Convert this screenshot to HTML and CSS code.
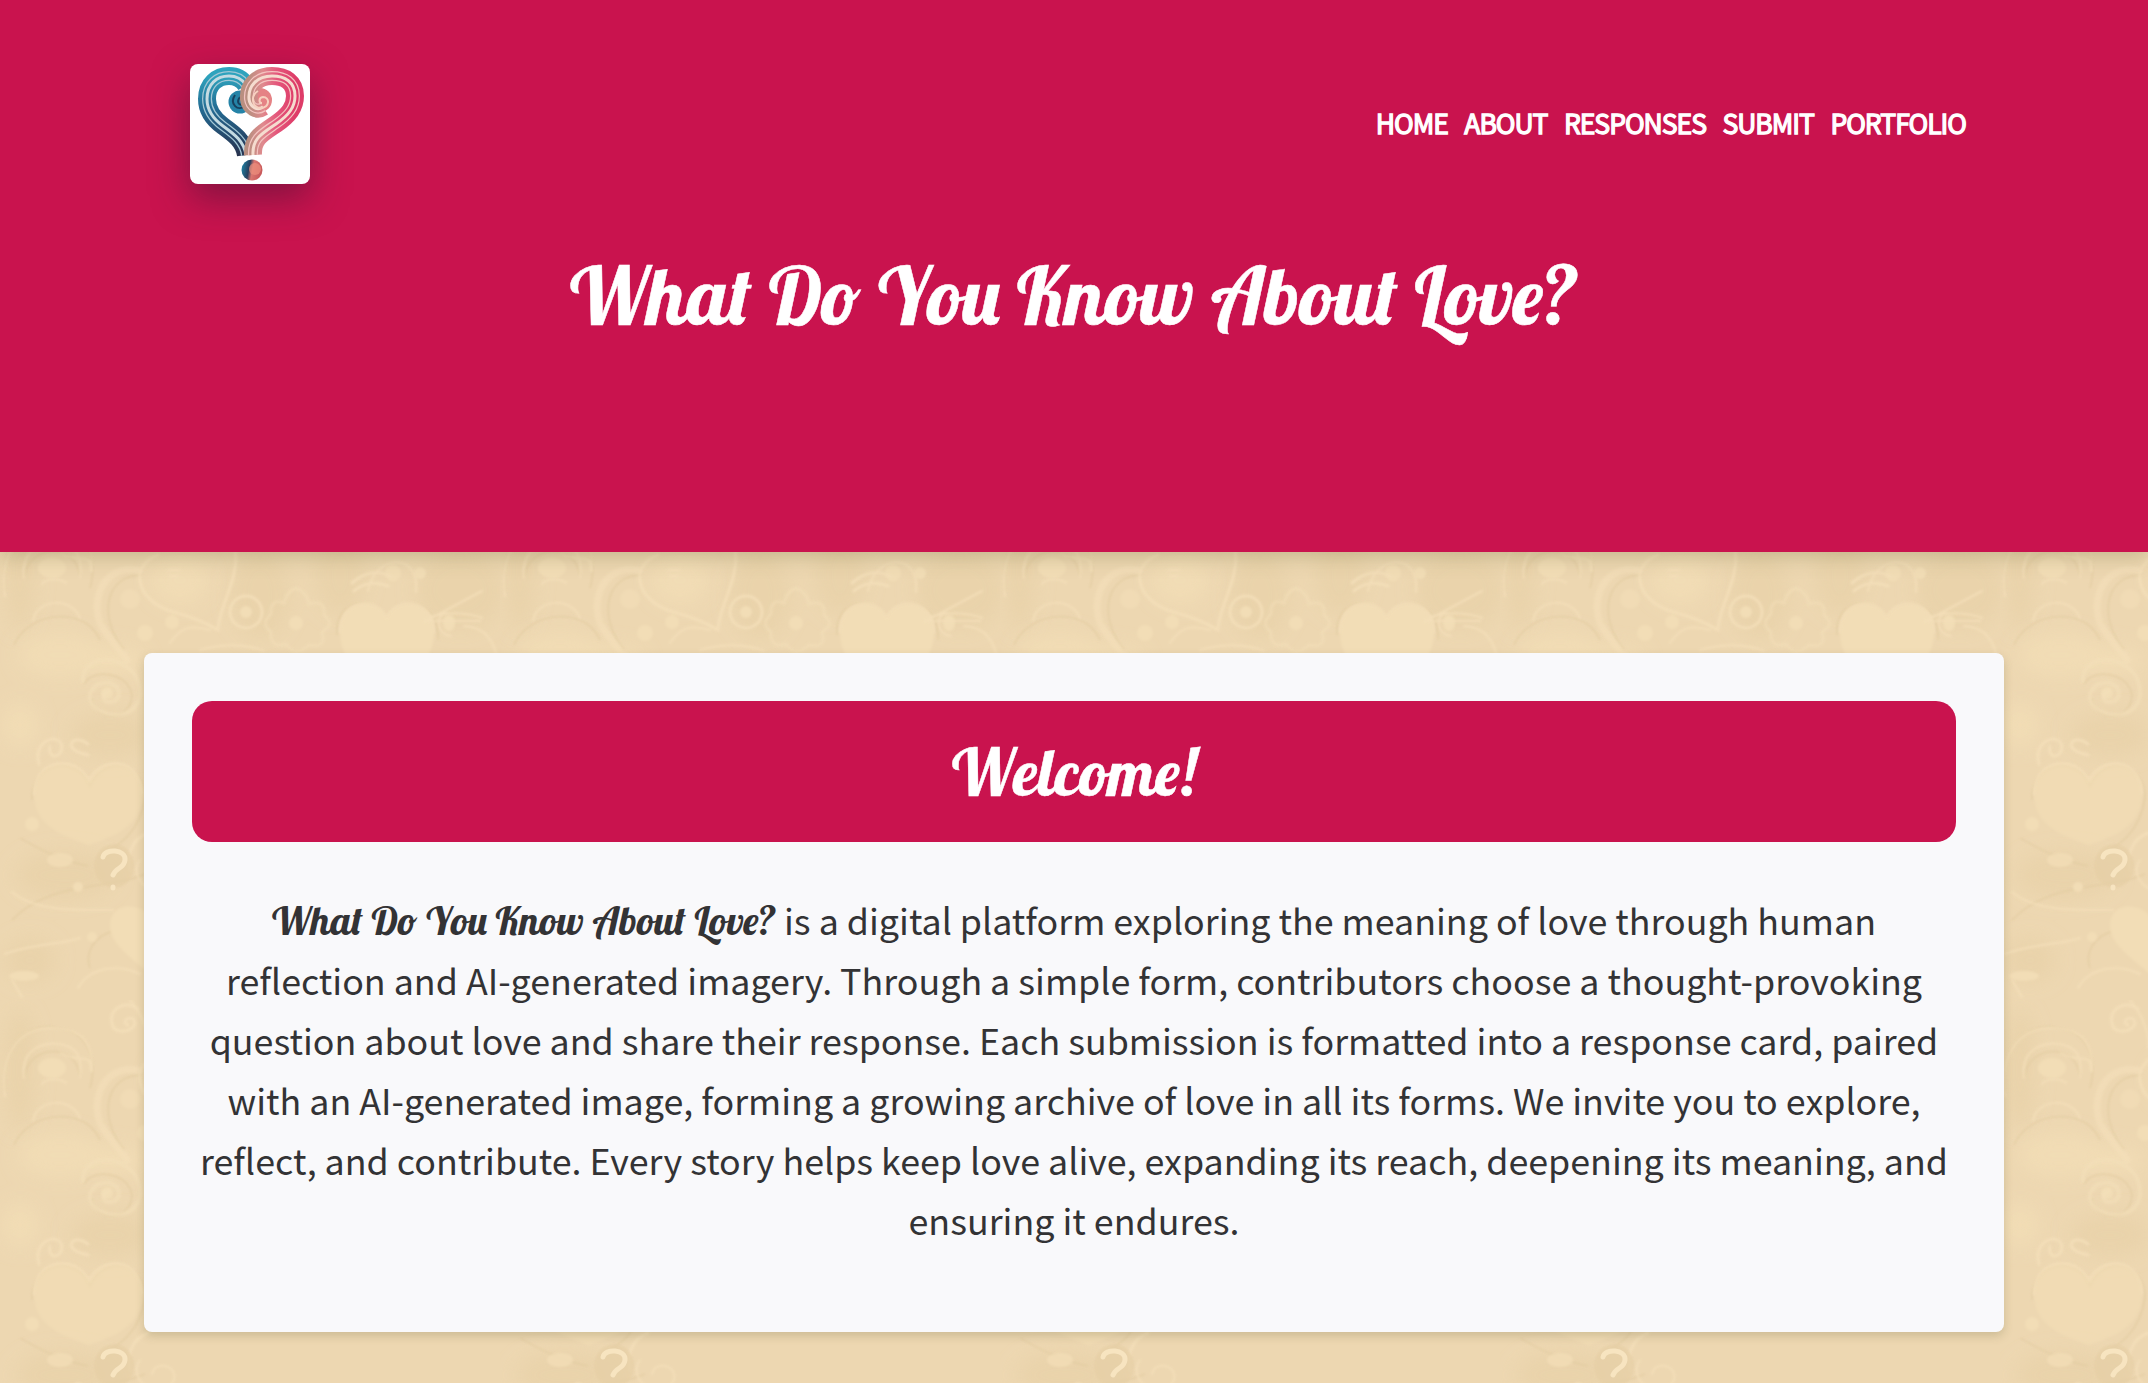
FILE: index.html
```html
<!DOCTYPE html>
<html lang="en">
<head>
<meta charset="utf-8">
<title>What Do You Know About Love?</title>
<link rel="stylesheet" href="styles.css">
</head>
<body>
<svg class="backdrop" aria-hidden="true">
  <defs>
    <filter id="soft" x="-5%" y="-5%" width="110%" height="110%"><feGaussianBlur stdDeviation="1"/></filter>
    <filter id="haze" x="-20%" y="-20%" width="140%" height="140%"><feGaussianBlur stdDeviation="9"/></filter>
    <pattern id="ornament" width="500" height="500" patternUnits="userSpaceOnUse">
      <rect width="500" height="500" fill="#edd7b1"/>
      <g filter="url(#haze)" fill="#e8d1a8" opacity=".7">
        <ellipse cx="20" cy="70" rx="16" ry="60"/><ellipse cx="110" cy="235" rx="40" ry="22"/>
        <ellipse cx="65" cy="375" rx="50" ry="24"/><ellipse cx="30" cy="460" rx="26" ry="22"/>
        <ellipse cx="260" cy="95" rx="30" ry="44"/><ellipse cx="460" cy="90" rx="45" ry="40"/>
        <ellipse cx="340" cy="75" rx="26" ry="40"/>
      </g>
      <g filter="url(#haze)" fill="#f3deb6" opacity=".75">
        <ellipse cx="60" cy="155" rx="42" ry="22"/><ellipse cx="180" cy="80" rx="28" ry="24"/>
        <ellipse cx="20" cy="225" rx="18" ry="22"/><ellipse cx="110" cy="160" rx="34" ry="14"/>
      </g>
      <g filter="url(#soft)" fill="none" stroke="#e2cba0" stroke-width="2" opacity=".6">
        <path d="M142 75C104 75 98 118 124 150M14 145C28 112 84 104 100 140M84 184C92 168 130 172 132 196C130 222 94 222 92 198M32 300C30 264 76 252 90 286C106 252 146 264 145 298C140 332 120 345 98 358M5 92C0 36 40 22 56 28C88 30 98 60 90 88M24 78C28 44 76 42 80 76M337 135C334 98 376 94 389 120C400 94 440 100 438 140"/>
        <path d="M12 420C50 380 110 390 145 374M90 468C80 440 120 416 145 440M20 338C45 352 60 360 88 366"/>
      </g>
      <g filter="url(#soft)" fill="#f2ddb6">
        <ellipse cx="52" cy="68" rx="14" ry="10"/><circle cx="145" cy="133" r="8"/><circle cx="172" cy="122" r="7"/>
        <circle cx="130" cy="99" r="10" opacity=".7"/><circle cx="393" cy="73" r="8"/><circle cx="420" cy="73" r="6"/>
        <ellipse cx="449" cy="123" rx="6" ry="8"/><circle cx="246" cy="112" r="6"/><circle cx="296" cy="123" r="7"/>
        <circle cx="107" cy="193" r="6"/><circle cx="32" cy="324" r="7"/><circle cx="78" cy="387" r="5"/>
        <ellipse cx="60" cy="360" rx="13" ry="7" opacity=".8"/><circle cx="92" cy="437" r="5"/>
        <path opacity=".65" d="M89 345C70 338 34 329 34 294C34 258 76 254 89 280C102 254 142 258 142 294C142 329 108 338 89 345Z"/>
        <path d="M387 199C368 178 340 164 340 132C340 98 377 96 387 117C397 96 434 98 434 132C434 164 406 178 387 199Z"/>
        <path d="M150 474C132 458 110 444 110 426C110 402 138 402 150 416C162 402 190 402 190 426C190 444 168 458 150 474Z"/>
        <ellipse cx="24" cy="476" rx="15" ry="5"/>
      </g>
      <g filter="url(#soft)" fill="none" stroke="#f4dfb9" stroke-width="3" stroke-linecap="round" opacity=".85">
        <path d="M137 70C96 65 90 112 104 130C112 142 119 148 127 160" stroke-width="7" opacity=".75"/>
        <path d="M158 55C128 66 137 100 170 111C190 116 203 121 218 130C218 108 240 78 235 50"/>
        <path d="M169 70H180M170 76H178M352 83C365 72 378 70 390 76M354 91C363 83 376 81 388 86"/>
        <circle cx="246" cy="112" r="16"/>
        <path d="M296 88Q307 92 309 104Q326 99 324 115Q336 124 322 132Q327 149 309 145Q296 158 286 144Q270 149 271 132Q260 123 271 114Q270 98 284 103Q287 91 296 88Z" opacity=".6"/>
        <path d="M424 122L482 91M430 117C450 111 470 113 482 118M428 121H480M368 91C374 55 420 50 416 92M446 113C434 116 438 136 451 136M464 126C486 127 493 142 496 153" stroke-width="2"/>
        <path d="M33 120C38 98 72 97 80 118M42 84C46 78 60 78 66 83M170 143C180 128 190 124 210 130M200 150Q235 140 264 151M61 53C80 65 91 50 91 71" stroke-width="2"/>
        <path d="M83 181C81 158 117 150 136 176C151 208 122 223 98 210C81 197 94 180 110 183C124 188 120 203 109 202C101 201 103 193 108 191" stroke-width="4" opacity=".7"/>
        <path d="M39 264C32 239 61 232 62 247C61 260 47 258 50 247M88 255C60 250 72 232 88 244" stroke-width="3"/>
        <path d="M34 294C34 258 76 254 89 280C102 254 142 258 142 294" stroke-width="2"/>
        <path d="M340 132C340 98 377 96 387 117C397 96 434 98 434 132" stroke-width="2"/>
        <path d="M12 392C35 412 80 410 113 410M5 454C30 444 60 445 80 438M78 488C90 466 120 464 140 474M12 480L22 497" stroke-width="2"/>
        <path d="M5 96C-1 50 23 28 50 28C80 28 93 40 92 71M24 78C20 47 47 40 64 45C80 49 82 62 80 77" stroke-width="2"/>
        <path d="M113 27C106 9 125-1 138 9M113 27C120 36 139 29 134 20C130 15 120 22 128 25M130 370C126 350 135 338 148 333" stroke-width="3"/>
        <path d="M130 0C145 18 150 38 148 48M140 360C126 380 160 405 174 380C178 365 155 360 152 374" stroke-width="2"/>
      </g>
      <ellipse cx="114" cy="366" rx="20" ry="22" fill="#e6cfa5" opacity=".7" filter="url(#soft)"/>
      <path d="M103 357C105 348 126 349 125 360C124 369 116 367 113 375M113 387V388" fill="none" stroke="#f7e4c0" stroke-width="5" stroke-linecap="round"/>
    </pattern>
  </defs>
  <rect width="100%" height="100%" fill="url(#ornament)"/>
</svg>

<header class="site-header">
  <div class="topbar">
    <a class="logo" href="#" aria-label="Home">
      <svg viewBox="0 0 120 120" width="120" height="120">
        <defs>
          <linearGradient id="cool" x1="0" y1="0" x2="0" y2="1"><stop offset="0" stop-color="#2ea3bd"/><stop offset=".45" stop-color="#23678f"/><stop offset="1" stop-color="#29334f"/></linearGradient>
          <linearGradient id="warm" x1="0" y1="0" x2="1" y2="0"><stop offset="0" stop-color="#b98f80"/><stop offset=".3" stop-color="#e08a8e"/><stop offset=".6" stop-color="#e4577c"/><stop offset="1" stop-color="#de3c68"/></linearGradient>
          <linearGradient id="dot" x1="0" y1="0" x2="1" y2=".2"><stop offset="0" stop-color="#1c8caf"/><stop offset=".42" stop-color="#27405f"/><stop offset=".6" stop-color="#d97770"/><stop offset="1" stop-color="#c95a5c"/></linearGradient>
          <path id="left" d="M56 91C54 77 44 70 33 62C22 54 17 45 17 35C17 20 27 12 39 12Q50 12 56 21"/>
          <path id="right" d="M63 91C62 74 73 69 86 60C99 51 105 43 105 32C105 18 95 12 82 12C67 12 58 22 59 35C60 43 67 47 73 43"/>
        </defs>
        <g fill="none">
          <circle cx="50" cy="38" r="11.500" fill="#2583a7"/><path d="M45 31C39 40 48 48 55 42M50 33C46 38 49 42 53 40" stroke="#17415f" stroke-width="2"/>
          <use href="#left" stroke="url(#cool)" stroke-width="18"/>
          <use href="#left" stroke="#a3c7d5" stroke-width="10"/>
          <use href="#left" stroke="url(#cool)" stroke-width="7.500"/>
          <use href="#left" stroke="#c4dbe2" stroke-width="3"/>
          <circle cx="70" cy="36" r="12" fill="#e58285"/>
          <use href="#right" stroke="url(#warm)" stroke-width="18"/>
          <use href="#right" stroke="#f4c3c0" stroke-width="10"/>
          <use href="#right" stroke="url(#warm)" stroke-width="7.500"/>
          <use href="#right" stroke="#f5dccf" stroke-width="3"/>
          <path d="M68 27C60 32 62 44 71 44C80 43 80 33 73 33C68 34 69 39 72 39" stroke="#f7d0bf" stroke-width="2"/>
        </g>
        <circle cx="62" cy="106" r="10.500" fill="url(#dot)"/><circle cx="65" cy="105" r="6" fill="#ee907d" opacity=".7"/>
      </svg>
    </a>
    <nav class="nav">
      <a href="#">HOME</a><a href="#">ABOUT</a><a href="#">RESPONSES</a><a href="#">SUBMIT</a><a href="#">PORTFOLIO</a>
    </nav>
  </div>
  <h1 class="script title">What Do You Know About Love?</h1>
</header>

<main class="card">
  <h2 class="script banner">Welcome!</h2>
  <p class="intro"><strong class="script name">What Do You Know About Love?</strong> is a digital platform exploring the meaning of love through human<br>reflection and AI-generated imagery. Through a simple form, contributors choose a thought-provoking<br>question about love and share their response. Each submission is formatted into a response card, paired<br>with an AI-generated image, forming a growing archive of love in all its forms. We invite you to explore,<br>reflect, and contribute. Every story helps keep love alive, expanding its reach, deepening its meaning, and<br>ensuring it endures.</p>
</main>
</body>
</html>
```
FILE: styles.css
```css
* { box-sizing: border-box; }

body {
  margin: 0;
  min-height: 1383px;
  overflow: hidden;
  background: #edd7b1;
  color: #333335;
  font-family: "Source Sans Pro", "Noto Sans CJK JP", sans-serif;
}

.backdrop {
  position: absolute;
  inset: 0;
  z-index: -1;
  width: 100%;
  height: 1383px;
}

.site-header {
  height: 552px;
  padding: 64px 182px 0 190px;
  background: #c9134e;
  box-shadow: 0 4px 20px rgba(90, 90, 40, .28);
}

.topbar {
  display: flex;
  align-items: center;
  justify-content: space-between;
}

.logo {
  width: 120px;
  height: 120px;
  overflow: hidden;
  border-radius: 8px;
  background: #fff;
  box-shadow: 0 14px 36px rgba(60, 20, 50, .5);
}

.logo svg { display: block; }

.nav {
  display: flex;
  gap: 16.500px;
  padding-bottom: 2px;
}

.nav a {
  color: #fff;
  font-size: 26.500px;
  font-weight: 400;
  line-height: 40px;
  letter-spacing: -1px;
  text-decoration: none;
  -webkit-text-stroke: 1.300px #fff;
}

.script {
  font-family: "Lobster", "Liberation Serif", serif;
  font-weight: 400;
  white-space: nowrap;
}

.title {
  margin: 61px 0 0 -8px;
  color: #fff;
  font-size: 80px;
  line-height: 100px;
  text-align: center;
  -webkit-text-stroke: .5px #fff;
}

.card {
  width: 1860px;
  height: 679px;
  margin: 101px auto 0;
  padding: 48px;
  border-radius: 8px;
  background: #f9f9fb;
  box-shadow: 0 4px 10px rgba(90, 90, 50, .22);
}

.banner {
  height: 141px;
  margin: 0;
  border-radius: 20px;
  background: #c9134e;
  color: #fff;
  font-size: 64px;
  line-height: 142px;
  text-align: center;
  -webkit-text-stroke: .5px #fff;
}

.intro {
  margin: 47px -40px 0;
  font-size: 35.800px;
  line-height: 60px;
  text-align: center;
  white-space: nowrap;
}

.name {
  font-size: 40px;
  line-height: 50px;
}
```
